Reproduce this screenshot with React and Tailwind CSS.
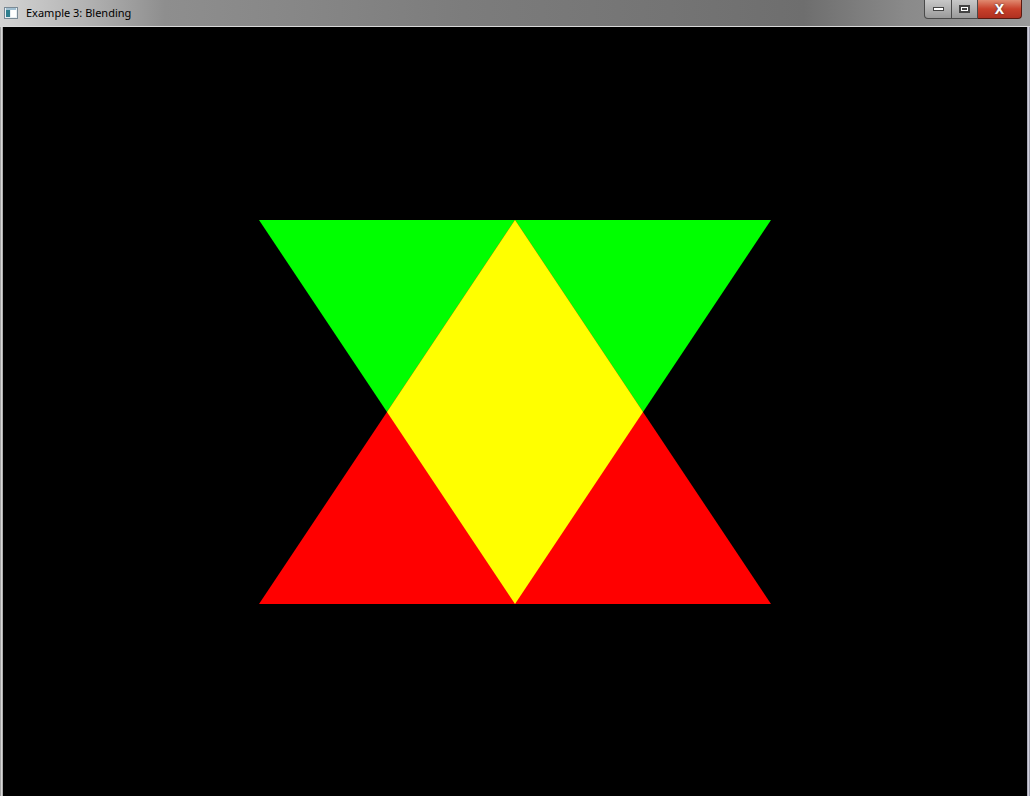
export default function App() {
  return (
    <div className="w-[1030px] h-[796px] flex flex-col overflow-hidden bg-black font-['Segoe_UI','Noto_Sans','Liberation_Sans',sans-serif]">
      {/* Title bar */}
      <div className="h-[26px] shrink-0 flex items-start bg-[linear-gradient(90deg,#d4d4d4_0%,#b4b4b4_8%,#8e8e8e_16%,#868686_30%,#7c7c7c_45%,#747474_65%,#6e6e6e_78%,#8a8a8a_88%,#9a9a9a_100%)]">
        <div className="flex items-center gap-[8px] pl-[4px] pt-[6px]">
          <svg width="14" height="12" viewBox="0 0 14 12">
            <rect x="0.5" y="0.5" width="13" height="11" fill="#e8eef2" stroke="#7a8a96" />
            <rect x="2" y="3" width="4" height="7" fill="#2f7f8f" />
            <rect x="7" y="3" width="5" height="7" fill="#ffffff" />
            <rect x="2" y="1.5" width="10" height="1" fill="#5a8fb0" />
          </svg>
          <span className="text-[11px] leading-[14px] text-black">Example 3: Blending</span>
        </div>
        <div className="ml-auto mr-[8px] flex h-[19px]">
          <div className="w-[28px] border border-[#4a4a4a] border-t-0 rounded-bl-[4px] bg-[linear-gradient(180deg,#c8c8c8,#9a9a9a)] flex items-center justify-center">
            <div className="w-[11px] h-[4px] bg-white border border-[#444]" />
          </div>
          <div className="w-[26px] border-b border-r border-[#4a4a4a] bg-[linear-gradient(180deg,#c8c8c8,#9a9a9a)] flex items-center justify-center">
            <div className="w-[11px] h-[8px] border-[2px] border-[#444] bg-white flex items-center justify-center">
              <div className="w-[5px] h-[2px] bg-[#444]" />
            </div>
          </div>
          <div className="w-[44px] border-b border-r border-[#5a1a10] rounded-br-[4px] bg-[linear-gradient(180deg,#e08a70,#c8402a_50%,#b03020)] flex items-center justify-center">
            <span className="text-white font-bold text-[14px] leading-none [text-shadow:0_0_2px_#333]">X</span>
          </div>
        </div>
      </div>
      <div className="h-[1px] shrink-0 bg-[#d8d8d8]" />

      {/* Client area */}
      <div className="flex-1 flex">
        <div className="w-[3px] shrink-0 bg-[linear-gradient(90deg,#8a8a8a,#d8d8d8,#9a9a9a)]" />
        <div className="flex-1 bg-black">
          <svg width="1024" height="769" viewBox="3 27 1024 769" className="block">
            <polygon points="259,220 771,220 515,604" fill="#00ff00" />
            <polygon points="259,604 771,604 515,220" fill="#ff0000" />
            <polygon points="515,220 643,412 515,604 387,412" fill="#ffff00" />
          </svg>
        </div>
        <div className="w-[3px] shrink-0 bg-[linear-gradient(90deg,#9a9aa8,#d0d0dc,#8a8a9a)]" />
      </div>
    </div>
  );
}
